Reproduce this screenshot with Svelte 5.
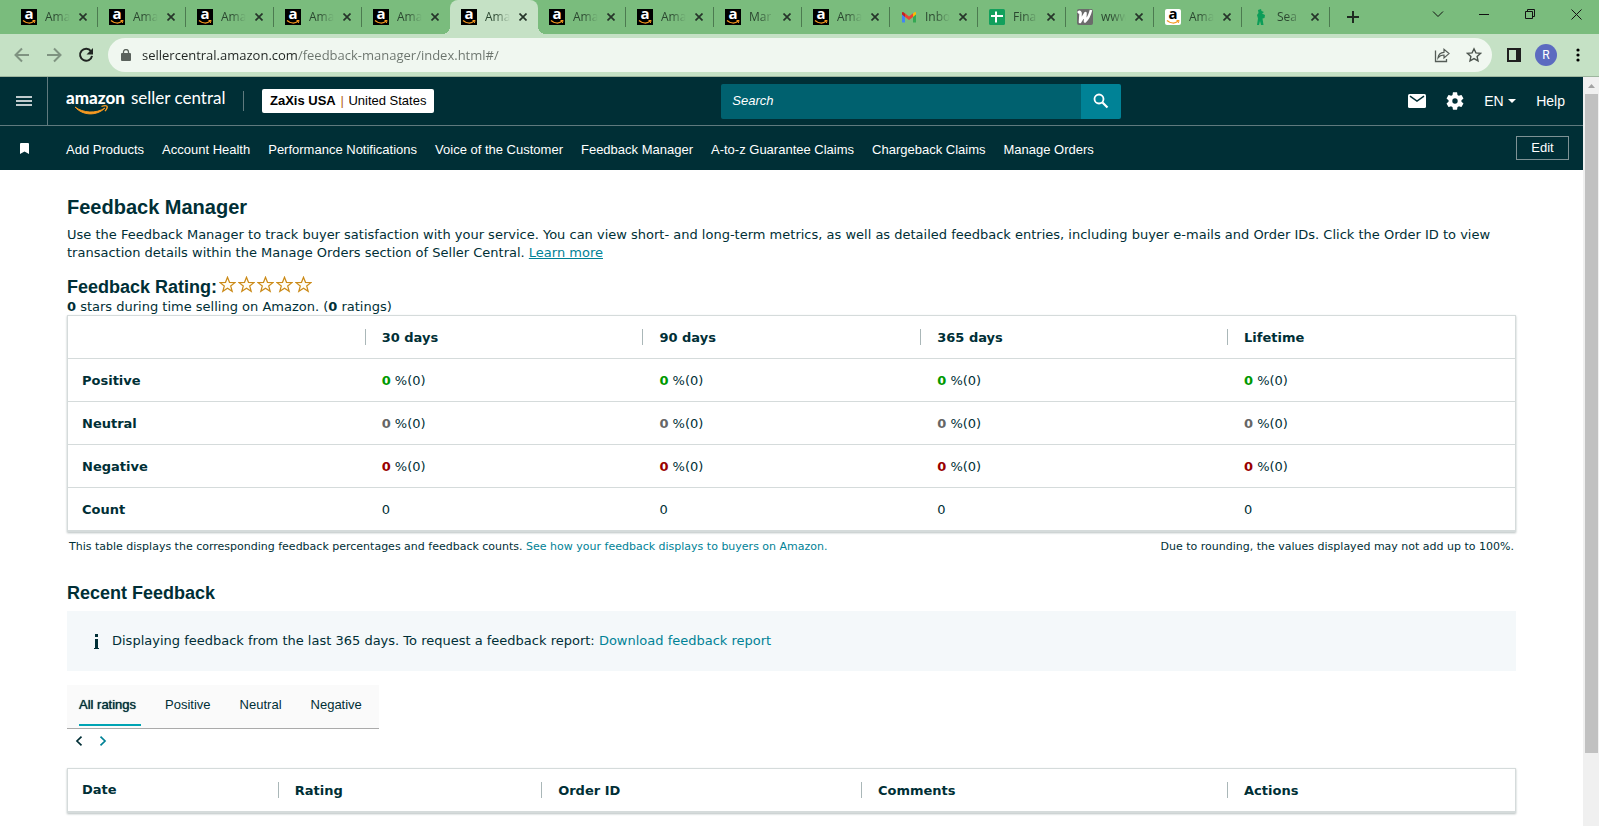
<script lang="ts">
	type Favicon = 'seller' | 'gmail' | 'sheets' | 'wave' | 'amazon' | 'seal';

	interface BrowserTab {
		icon: Favicon;
		title: string;
	}

	const browserTabs: BrowserTab[] = [
		{ icon: 'seller', title: 'Ama' },
		{ icon: 'seller', title: 'Ama' },
		{ icon: 'seller', title: 'Ama' },
		{ icon: 'seller', title: 'Ama' },
		{ icon: 'seller', title: 'Ama' },
		{ icon: 'seller', title: 'Ama' },
		{ icon: 'seller', title: 'Ama' },
		{ icon: 'seller', title: 'Ama' },
		{ icon: 'seller', title: 'Mar' },
		{ icon: 'seller', title: 'Ama' },
		{ icon: 'gmail', title: 'Inbo' },
		{ icon: 'sheets', title: 'Fina' },
		{ icon: 'wave', title: 'www' },
		{ icon: 'amazon', title: 'Ama' },
		{ icon: 'seal', title: 'Sea' }
	];
	let activeTab = $state(5);

	const favorites = [
		'Add Products',
		'Account Health',
		'Performance Notifications',
		'Voice of the Customer',
		'Feedback Manager',
		'A-to-z Guarantee Claims',
		'Chargeback Claims',
		'Manage Orders'
	];

	const periods = ['30 days', '90 days', '365 days', 'Lifetime'];
	const ratingRows = [
		{ label: 'Positive', tone: 'positive', values: [0, 0, 0, 0] },
		{ label: 'Neutral', tone: 'neutral', values: [0, 0, 0, 0] },
		{ label: 'Negative', tone: 'negative', values: [0, 0, 0, 0] }
	];
	const counts = [0, 0, 0, 0];

	const filters = ['All ratings', 'Positive', 'Neutral', 'Negative'];
	let activeFilter = $state('All ratings');

	const feedbackColumns = ['Date', 'Rating', 'Order ID', 'Comments', 'Actions'];

	let url = $state('sellercentral.amazon.com/feedback-manager/index.html#/');
	let query = $state('');
</script>

{#snippet favicon(icon: Favicon)}
	<svg class="favicon" viewBox="0 0 16 16" aria-hidden="true">
		{#if icon === 'seller' || icon === 'amazon'}
			<rect width="16" height="16" rx={icon === 'amazon' ? 2 : 0} fill={icon === 'amazon' ? '#fff' : '#000'} />
			<text x="8" y="10" text-anchor="middle" class="glyph" fill={icon === 'amazon' ? '#000' : '#fff'}>a</text>
			<path d="M2 11.500c3.500 3 8 3.200 11 .8" fill="none" stroke="#f59a22" stroke-width="1.400" />
			<path d="M11.500 11.500h2.600l-.8 2.500" fill="none" stroke="#f59a22" />
		{:else if icon === 'gmail'}
			<path d="M1 4.500v9h3V7z" fill="#4285f4" />
			<path d="M15 4.500v9h-3V7z" fill="#34a853" />
			<path d="M1 4v1.500L4 8V4.500L2.500 3.200C1.800 2.700 1 3.200 1 4z" fill="#c5221f" />
			<path d="M15 4v1.500L12 8V4.500l1.500-1.300C14.200 2.700 15 3.200 15 4z" fill="#fbbc04" />
			<path d="M4 4.300 8 7.400l4-3.100V8l-4 3-4-3z" fill="#ea4335" />
		{:else if icon === 'sheets'}
			<rect width="16" height="16" rx="1.500" fill="#12a05c" />
			<path d="M7 2.500v11M2 7h12" stroke="#fff" stroke-width="2" />
		{:else if icon === 'wave'}
			<rect width="16" height="16" rx="2" fill="#6b6b6b" />
			<path d="M1 4c2-2 3-1 2.500 2L3 13 8.500 4l-.5 8.500C11 10 13 5 14 1" fill="none" stroke="#fff" stroke-width="2.600" stroke-linejoin="round" />
		{:else}
			<path d="M5 1l3-1 .5 2 2.500 1-2 1.500 3 1.500-.5 3-2 .5 1 6.500H8l-1-4-1 4H4l1-6.500-1-3.500 1.500-2z" fill="#0c9d58" />
		{/if}
	</svg>
{/snippet}

<div class="window">
	<div class="tab-strip">
		<div class="browser-tabs">
			{#each browserTabs as tab, i}
				<div class="browser-tab" class:active={i === activeTab} class:before-active={i === activeTab - 1}>
					<button class="tab-main" onclick={() => (activeTab = i)}>
						{@render favicon(tab.icon)}
						<span class="tab-title">{tab.title}</span>
					</button>
					<button class="tab-close" aria-label="Close tab">
						<svg width="8" height="8" viewBox="0 0 8 8"><path d="M.5.5l7 7M7.500.5l-7 7" stroke="#26352a" stroke-width="1.700" /></svg>
					</button>
				</div>
			{/each}
		</div>
		<button class="new-tab" aria-label="New tab">
			<svg width="12" height="12" viewBox="0 0 12 12"><path d="M6 0v12M0 6h12" stroke="#1f2a21" stroke-width="2" /></svg>
		</button>
		<div class="window-buttons">
			<button aria-label="Search tabs">
				<svg width="12" height="10" viewBox="0 0 12 10"><path d="M1 2.500l5 5 5-5" fill="none" stroke="#111" /></svg>
			</button>
			<button aria-label="Minimize">
				<svg width="10" height="10" viewBox="0 0 10 10"><path d="M0 5.500h10" stroke="#111" /></svg>
			</button>
			<button aria-label="Restore">
				<svg width="10" height="10" viewBox="0 0 10 10"><path d="M.5 2.500h7v7h-7zM2.500 2.500v-2h7v7h-2" fill="none" stroke="#111" /></svg>
			</button>
			<button aria-label="Close">
				<svg width="11" height="11" viewBox="0 0 11 11"><path d="M.5.5l10 10M10.500.5l-10 10" stroke="#111" /></svg>
			</button>
		</div>
	</div>

	<div class="toolbar">
		<button class="tool" aria-label="Back">
			<svg width="16" height="16" viewBox="0 0 16 16"><path d="M15 8H2M8 1.500 1.500 8 8 14.500" fill="none" stroke="#7f9381" stroke-width="2" /></svg>
		</button>
		<button class="tool" aria-label="Forward">
			<svg width="16" height="16" viewBox="0 0 16 16"><path d="M1 8h13M8 1.500 14.500 8 8 14.500" fill="none" stroke="#7f9381" stroke-width="2" /></svg>
		</button>
		<button class="tool" aria-label="Reload">
			<svg width="16" height="16" viewBox="0 0 16 16">
				<path d="M13 4.300A6 6 0 1 0 14 8.800" fill="none" stroke="#1f2421" stroke-width="2" />
				<path d="M15 1v6.500H8.500z" fill="#1f2421" />
			</svg>
		</button>
		<div class="address">
			<svg width="10" height="12" viewBox="0 0 10 12" aria-hidden="true">
				<rect y="4" width="10" height="8" rx="1" fill="#5a625c" />
				<path d="M2.500 5V3a2.500 2.500 0 0 1 5 0v2" fill="none" stroke="#5a625c" stroke-width="1.300" />
			</svg>
			<input class="url" aria-label="Address" spellcheck="false" bind:value={url} />
			<button class="tool" aria-label="Share">
				<svg width="16" height="16" viewBox="0 0 16 16">
					<path d="M1.500 3.500v11h11V12" fill="none" stroke="#555c57" stroke-width="1.300" />
					<path d="M4 11c.3-3.800 2.500-5.500 6-5.700V2.300L15 6.600 10 11V8C7.500 8 5.500 8.800 4 11z" fill="none" stroke="#555c57" stroke-width="1.200" />
				</svg>
			</button>
			<button class="tool" aria-label="Bookmark this page">
				<svg width="16" height="16" viewBox="0 0 16 16">
					<path d="M8 1.800l1.900 4.100 4.500.5-3.300 3 .9 4.500L8 11.600l-4 2.300.9-4.500-3.300-3 4.500-.5z" fill="none" stroke="#4c544e" stroke-width="1.400" />
				</svg>
			</button>
		</div>
		<button class="tool" aria-label="Side panel">
			<svg width="14" height="14" viewBox="0 0 14 14"><path d="M1 1h12v12H1z" fill="none" stroke="#1f1f1f" stroke-width="2" /><path d="M9 0h5v14H9z" fill="#1f1f1f" /></svg>
		</button>
		<button class="tool" aria-label="Profile"><span class="avatar">R</span></button>
		<button class="tool" aria-label="Menu">
			<svg width="4" height="14" viewBox="0 0 4 14"><circle cx="2" cy="2" r="1.600" /><circle cx="2" cy="7" r="1.600" /><circle cx="2" cy="12" r="1.600" /></svg>
		</button>
	</div>

	<div class="viewport">
		<div class="page">
			<header class="header">
				<button class="menu" aria-label="Open navigation">
					<svg width="16" height="12" viewBox="0 0 16 12"><path d="M0 2h16M0 6h16M0 10h16" stroke="#fff" stroke-width="1.500" /></svg>
				</button>
				<a class="logo" href="#/" aria-label="amazon seller central">
					<svg width="160" height="30" viewBox="0 0 160 30">
						<text x="0" y="18" class="logo-bold">amazon</text>
						<text x="65" y="18" class="logo-light">seller central</text>
						<path d="M9 21c8 6 21 7 30 1-8 8-22 8-30-1z" fill="#f79a21" stroke="#f79a21" />
						<path d="M35.500 20.500c3-1.200 5-.8 5.500-.3s-.3 3-2 5" fill="none" stroke="#f79a21" stroke-width="1.300" />
					</svg>
				</a>
				<button class="account"><b>ZaXis USA</b> <i>|</i> United States</button>
				<form class="search" onsubmit={(e) => e.preventDefault()}>
					<input type="text" placeholder="Search" aria-label="Search" bind:value={query} />
					<button aria-label="Run search">
						<svg width="16" height="16" viewBox="0 0 16 16"><circle cx="6" cy="6" r="4.500" fill="none" stroke="#fff" stroke-width="1.800" /><path d="M9.500 9.500l5 5" stroke="#fff" stroke-width="2.200" /></svg>
					</button>
				</form>
				<div class="header-links">
					<a href="#/messages" aria-label="Messages">
						<svg width="18" height="14" viewBox="0 0 18 14"><rect width="18" height="14" rx="1.500" fill="#fff" /><path d="M2 2.200l7 4.800 7-4.800" fill="none" stroke="#002f36" stroke-width="1.500" /></svg>
					</a>
					<a href="#/settings" aria-label="Settings">
						<svg width="18" height="18" viewBox="2 2 20 20">
							<path fill="#fff" d="M19.140 12.940c.04-.3.06-.61.06-.94s-.02-.64-.07-.94l2.030-1.580c.18-.14.23-.41.12-.61l-1.920-3.320c-.12-.22-.37-.29-.59-.22l-2.390.96c-.5-.38-1.030-.7-1.620-.94l-.36-2.540c-.04-.24-.24-.41-.48-.41h-3.840c-.24 0-.43.17-.47.41l-.36 2.540c-.59.24-1.130.57-1.620.94l-2.390-.96c-.22-.08-.47 0-.59.22L2.740 8.870c-.12.21-.08.47.12.61l2.030 1.580c-.05.3-.09.63-.09.94s.02.64.07.94l-2.030 1.580c-.18.14-.23.41-.12.61l1.920 3.320c.12.22.37.29.59.22l2.390-.96c.5.38 1.030.7 1.620.94l.36 2.540c.05.24.24.41.48.41h3.840c.24 0 .44-.17.47-.41l.36-2.540c.59-.24 1.130-.56 1.620-.94l2.390.96c.22.08.47 0 .59-.22l1.920-3.320c.12-.22.07-.47-.12-.61zM12 15a3 3 0 1 1 0-6 3 3 0 0 1 0 6z" />
						</svg>
					</a>
					<label class="language">
						<select aria-label="Language"><option>EN</option></select>
						<svg width="8" height="4" viewBox="0 0 8 4" aria-hidden="true"><path d="M0 0h8L4 4z" fill="#fff" /></svg>
					</label>
					<a href="#/help">Help</a>
				</div>
			</header>

			<nav class="favorites">
				<span class="bookmark">
					<svg width="9" height="11" viewBox="0 0 9 11" aria-hidden="true"><path d="M0 1a1 1 0 0 1 1-1h7a1 1 0 0 1 1 1v10L4.500 8.500 0 11z" fill="#fff" /></svg>
				</span>
				<div class="favorite-links">
					{#each favorites as name}
						<a href="#/">{name}</a>
					{/each}
				</div>
				<button class="edit">Edit</button>
			</nav>

			<main>
				<h1>Feedback Manager</h1>
				<p class="intro">
					Use the Feedback Manager to track buyer satisfaction with your service. You can view short- and long-term
					metrics, as well as detailed feedback entries, including buyer e-mails and Order IDs. Click the Order ID to
					view transaction details within the Manage Orders section of Seller Central. <a href="#/learn">Learn more</a>
				</p>

				<div class="rating">
					<h2>Feedback Rating:</h2>
					<span class="stars" role="img" aria-label="0 out of 5 stars">
						{#each { length: 5 } as _}
							<svg width="17" height="17" viewBox="0 0 17 17">
								<path d="M8.500 1.200l2 5.100 5.500.3-4.300 3.400 1.500 5.300-4.700-3-4.700 3 1.500-5.300L1 6.600l5.500-.3z" fill="#fffdf5" stroke="#cb8a17" stroke-width="1.200" />
							</svg>
						{/each}
					</span>
				</div>
				<p class="summary"><b>0</b> stars during time selling on Amazon. (<b>0</b> ratings)</p>

				<table class="grid">
					<colgroup><col class="c-label" /><col class="c-30" /><col class="c-90" /><col class="c-365" /><col /></colgroup>
					<thead>
						<tr>
							<td></td>
							{#each periods as period}
								<th scope="col"><span class="split">{period}</span></th>
							{/each}
						</tr>
					</thead>
					<tbody>
						{#each ratingRows as row (row.label)}
							<tr>
								<th scope="row">{row.label}</th>
								{#each row.values as value}
									<td><b class={row.tone}>{value}</b> %(0)</td>
								{/each}
							</tr>
						{/each}
						<tr>
							<th scope="row">Count</th>
							{#each counts as count}
								<td>{count}</td>
							{/each}
						</tr>
					</tbody>
				</table>
				<div class="notes">
					<span>
						This table displays the corresponding feedback percentages and feedback counts.
						<a href="#/display">See how your feedback displays to buyers on Amazon.</a>
					</span>
					<span>Due to rounding, the values displayed may not add up to 100%.</span>
				</div>

				<h2 class="recent">Recent Feedback</h2>
				<div class="info">
					<svg width="5" height="15" viewBox="0 0 5 15" aria-hidden="true"><path d="M1 0h3v3H1zM1 5h3v9h1v1H0v-1h1z" fill="#002f36" /></svg>
					<span>
						Displaying feedback from the last 365 days. To request a feedback report:
						<a href="#/report">Download feedback report</a>
					</span>
				</div>

				<div class="filters" role="tablist">
					{#each filters as filter}
						<button
							role="tab"
							aria-selected={filter === activeFilter}
							class:selected={filter === activeFilter}
							onclick={() => (activeFilter = filter)}>{filter}</button
						>
					{/each}
				</div>
				<div class="pager">
					<button aria-label="Previous page">
						<svg width="8" height="10" viewBox="0 0 8 10"><path d="M6.500.7 2 5l4.500 4.300" fill="none" stroke="#002f36" stroke-width="1.700" /></svg>
					</button>
					<button aria-label="Next page">
						<svg width="8" height="10" viewBox="0 0 8 10"><path d="M1.500.7 6 5 1.500 9.300" fill="none" stroke="#008296" stroke-width="1.700" /></svg>
					</button>
				</div>

				<table class="grid">
					<colgroup><col class="c-date" /><col class="c-rating" /><col class="c-order" /><col class="c-comments" /><col /></colgroup>
					<thead>
						<tr>
							{#each feedbackColumns as column, i}
								<th scope="col"><span class:split={i > 0}>{column}</span></th>
							{/each}
						</tr>
					</thead>
				</table>
			</main>
		</div>

		<div class="scrollbar" aria-hidden="true">
			<svg width="16" height="17" viewBox="0 0 16 17"><path d="M5 11h7L8.500 7z" fill="#a3a3a3" /></svg>
			<div class="thumb"></div>
			<div class="rest"></div>
		</div>
	</div>
</div>

<style>
	:global(body) {
		background: #fff;
	}

	.window {
		min-height: 100vh;
		display: flex;
		flex-direction: column;
		box-sizing: border-box;
		font-family: Verdana, 'DejaVu Sans', sans-serif;
		font-size: 13px;
		line-height: 18px;
		color: #002f36;
	}

	button,
	input,
	select {
		margin: 0;
		padding: 0;
		border: 0;
		background: none;
		font: inherit;
		color: inherit;
	}

	svg {
		display: block;
		flex-shrink: 0;
	}

	a {
		color: #008296;
		text-decoration: none;
	}

	h1,
	h2,
	p {
		margin: 0;
	}

	/* Browser chrome */
	.tab-strip {
		display: flex;
		height: 34px;
		padding-left: 10px;
		background: #7abc7d;
		font-family: 'Segoe UI', 'Open Sans', sans-serif;
		font-size: 12px;
	}

	.browser-tabs {
		display: flex;
		min-width: 0;
	}

	.browser-tab {
		position: relative;
		display: flex;
		align-items: center;
		justify-content: space-between;
		width: 88px;
		min-width: 0;
		box-sizing: border-box;
		padding: 0 7px 0 11px;
	}

	.browser-tab::after {
		content: '';
		position: absolute;
		right: 0;
		top: 7px;
		width: 1px;
		height: 20px;
		background: #4c7a50;
	}

	.browser-tab.active {
		background: #c5e1c5;
		border-radius: 8px 8px 0 0;
	}

	.browser-tab.before-active::after {
		display: none;
	}

	/* curved feet on both sides of the active tab */
	.browser-tab.active::before,
	.browser-tab.active::after {
		content: '';
		position: absolute;
		top: auto;
		bottom: 0;
		width: 8px;
		height: 8px;
	}

	.browser-tab.active::before {
		left: -8px;
		background: radial-gradient(circle at 0 0, #7abc7d 8px, #c5e1c5 8px);
	}

	.browser-tab.active::after {
		right: -8px;
		background: radial-gradient(circle at 100% 0, #7abc7d 8px, #c5e1c5 8px);
	}

	.tab-main {
		display: flex;
		align-items: center;
		gap: 8px;
	}

	.favicon {
		width: 16px;
		height: 16px;
	}

	.glyph {
		font: bold 15px 'Open Sans', sans-serif;
	}

	.tab-title {
		white-space: nowrap;
		color: #2b4730;
		mask-image: linear-gradient(to right, #000 10px, transparent 25px);
	}

	.tab-close {
		padding: 4px;
	}

	.new-tab {
		padding: 0 17px;
	}

	.window-buttons {
		display: flex;
		margin-left: auto;
		height: 28px;
	}

	.window-buttons button {
		display: grid;
		place-items: center;
		width: 46px;
	}

	.toolbar {
		display: flex;
		align-items: center;
		height: 42px;
		padding: 0 5px 0 6px;
		background: #c5e1c5;
		border-bottom: 1px solid #9db59e;
	}

	.tool {
		display: grid;
		place-items: center;
		width: 32px;
		height: 32px;
		flex-shrink: 0;
	}

	.address {
		flex: 1;
		min-width: 0;
		display: flex;
		align-items: center;
		height: 34px;
		margin: 0 6px;
		padding: 0 2px 0 13px;
		box-sizing: border-box;
		border-radius: 17px;
		background: #f0f7f0;
	}

	/* host in dark ink, path in grey */
	.url {
		flex: 1;
		min-width: 0;
		margin-left: 11px;
		font: 13px 'Segoe UI', 'Open Sans', sans-serif;
		outline: 0;
		color: transparent;
		caret-color: #1f2421;
		background: linear-gradient(to right, #1f2421 156px, #6a736c 156px);
		background-clip: text;
	}

	.avatar {
		width: 22px;
		border-radius: 50%;
		background: #5c6bc0;
		color: #fff;
		font: 12px/22px Roboto, sans-serif;
	}

	/* Page */
	.viewport {
		flex: 1;
		display: flex;
	}

	.page {
		flex: 1;
		min-width: 0;
	}

	.scrollbar {
		display: flex;
		flex-direction: column;
		width: 16px;
		background: #f0f0f0;
	}

	.thumb {
		flex: 9;
		margin: 0 1px 0 2px;
		background: #c1c1c1;
	}

	.rest {
		flex: 1;
	}

	.header,
	.favorites {
		display: flex;
		align-items: center;
		background: #002f36;
		color: #fff;
		font-family: Arial, 'Liberation Sans', sans-serif;
	}

	.header {
		height: 48px;
		border-bottom: 1px solid #5f7a7e;
	}

	.header a,
	.favorites a {
		color: #fff;
	}

	.menu {
		display: grid;
		place-items: center;
		align-self: stretch;
		width: 48px;
		border-right: 1px solid #5f7a7e;
	}

	.logo {
		margin-left: 18px;
		padding-right: 18px;
		background: linear-gradient(#5f7a7e, #5f7a7e) right center / 1px 20px no-repeat;
	}

	.logo-bold {
		font: 900 17px Lato, sans-serif;
		fill: #fff;
	}

	.logo-light {
		font: 17px Lato, sans-serif;
		fill: #fff;
	}

	.account {
		height: 24px;
		margin-left: 18px;
		padding: 0 8px;
		border-radius: 2px;
		background: #fff;
		color: #000;
		white-space: nowrap;
	}

	.account i {
		margin: 0 1px;
		font-style: normal;
		color: #b5651d;
	}

	.search {
		display: flex;
		width: 400px;
		height: 35px;
		margin: 0 auto;
	}

	.search input {
		flex: 1;
		min-width: 0;
		padding: 0 11px;
		border-radius: 2px 0 0 2px;
		background: #00616f;
	}

	.search input::placeholder {
		color: #fff;
		font-style: italic;
		opacity: 1;
	}

	.search button {
		display: grid;
		place-items: center;
		width: 40px;
		border-radius: 0 2px 2px 0;
		background: #008296;
	}

	.header-links {
		display: flex;
		align-items: center;
		gap: 20px;
		padding-right: 18px;
		font-size: 14px;
	}

	.language {
		display: flex;
		align-items: center;
		gap: 4px;
	}

	.language select {
		appearance: none;
	}

	.favorites {
		height: 44px;
		padding-right: 14px;
	}

	.bookmark {
		display: grid;
		place-items: center;
		width: 48px;
	}

	.favorite-links {
		display: flex;
		gap: 18px;
		margin-left: 18px;
		padding-top: 4px;
		white-space: nowrap;
	}

	.edit {
		width: 53px;
		height: 24px;
		margin-left: auto;
		border: 1px solid #7e9295;
	}

	main {
		padding: 25px 67px 12px;
	}

	h1,
	h2 {
		font-family: Arial, 'Liberation Sans', sans-serif;
		font-size: 20px;
		line-height: 24px;
	}

	h2 {
		font-size: 18px;
		line-height: 22px;
	}

	.intro {
		margin-top: 7px;
	}

	.intro a {
		text-decoration: underline;
	}

	.rating {
		display: flex;
		gap: 2px;
		margin-top: 14px;
	}

	.stars {
		display: flex;
		gap: 2px;
	}

	.summary {
		line-height: 17px;
	}

	.grid {
		width: 100%;
		table-layout: fixed;
		border-collapse: separate;
		border-spacing: 0;
		border: 1px solid #d5dbdb;
		border-bottom-width: 2px;
		box-shadow: 0 1px 2px #b8c0c0;
	}

	.grid th,
	.grid td {
		height: 42px;
		padding: 0 0 0 17px;
		text-align: left;
	}

	.grid th:first-child {
		padding-left: 14px;
	}

	.grid thead th:not(:first-child) {
		padding-left: 0;
	}

	.grid tbody th,
	.grid tbody td {
		height: 40px;
		padding-top: 2px;
		border-top: 1px solid #d5dbdb;
	}

	.split {
		display: block;
		height: 16px;
		padding-left: 16px;
		border-left: 1px solid #aab7b8;
	}

	.c-label {
		width: 20.5%;
	}

	.c-30,
	.c-90 {
		width: 19.2%;
	}

	.c-365 {
		width: 21.2%;
	}

	.c-date {
		width: 14.5%;
	}

	.c-rating {
		width: 18.2%;
	}

	.c-order {
		width: 22.1%;
	}

	.c-comments {
		width: 25.3%;
	}

	.positive {
		color: #090;
	}

	.neutral {
		color: #666;
	}

	.negative {
		color: #900;
	}

	.notes {
		display: flex;
		justify-content: space-between;
		margin-top: 7px;
		padding: 0 2px;
		font-size: 11px;
		line-height: 16px;
	}

	.recent {
		margin-top: 27px;
	}

	.info {
		display: flex;
		align-items: center;
		gap: 13px;
		height: 60px;
		margin-top: 7px;
		padding-left: 27px;
		background: #f4f8fa;
	}

	.filters {
		display: flex;
		gap: 24px;
		width: fit-content;
		height: 43px;
		margin-top: 14px;
		padding: 0 12px;
		border-bottom: 1px solid #aaa;
		background: #fafafa;
		font-family: Arial, 'Liberation Sans', sans-serif;
	}

	.filters button {
		padding: 0 5px 0 0;
		margin-bottom: 2px;
		border-bottom: 2px solid transparent;
	}

	.filters .selected {
		border-color: #00a4b4;
		text-shadow: 0 0 1px #002f36;
	}

	.pager {
		display: flex;
		gap: 16px;
		height: 24px;
		margin: 0 0 15px 8px;
	}
</style>
